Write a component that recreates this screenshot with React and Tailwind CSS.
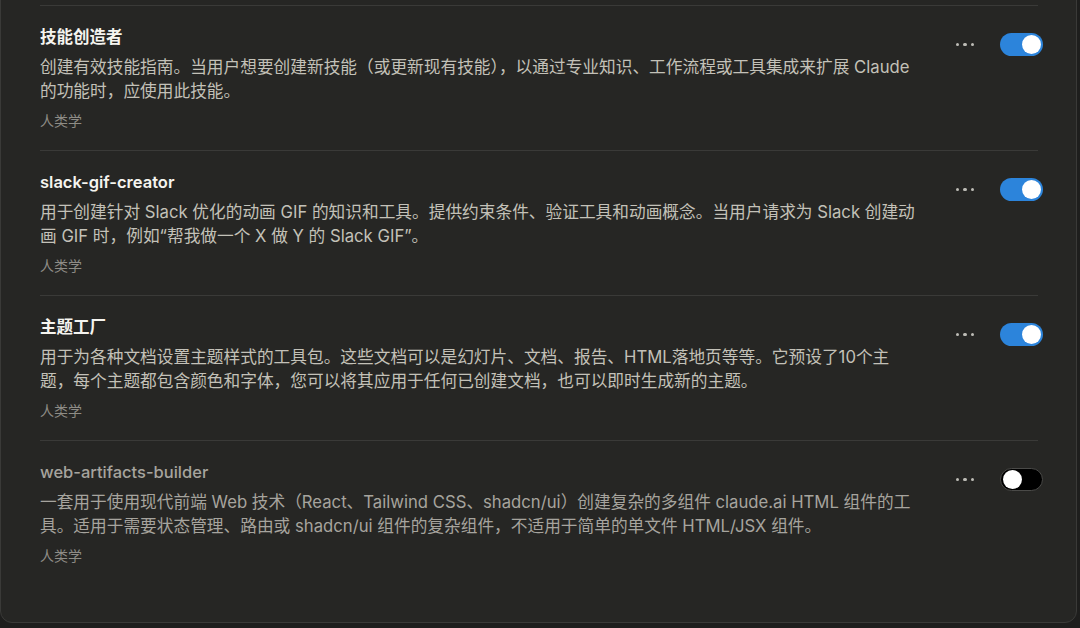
import { useState } from 'react';

const skills = [
  {
    id: 'skill-creator',
    name: '技能创造者',
    lines: [
      '创建有效技能指南。当用户想要创建新技能（或更新现有技能），以通过专业知识、工作流程或工具集成来扩展 Claude',
      '的功能时，应使用此技能。',
    ],
    author: '人类学',
    enabled: true,
  },
  {
    id: 'slack-gif-creator',
    name: 'slack-gif-creator',
    lines: [
      '用于创建针对 Slack 优化的动画 GIF 的知识和工具。提供约束条件、验证工具和动画概念。当用户请求为 Slack 创建动',
      '画 GIF 时，例如“帮我做一个 X 做 Y 的 Slack GIF”。',
    ],
    author: '人类学',
    enabled: true,
  },
  {
    id: 'theme-factory',
    name: '主题工厂',
    lines: [
      '用于为各种文档设置主题样式的工具包。这些文档可以是幻灯片、文档、报告、HTML落地页等等。它预设了10个主',
      '题，每个主题都包含颜色和字体，您可以将其应用于任何已创建文档，也可以即时生成新的主题。',
    ],
    author: '人类学',
    enabled: true,
  },
  {
    id: 'web-artifacts-builder',
    name: 'web-artifacts-builder',
    lines: [
      '一套用于使用现代前端 Web 技术（React、Tailwind CSS、shadcn/ui）创建复杂的多组件 claude.ai HTML 组件的工',
      '具。适用于需要状态管理、路由或 shadcn/ui 组件的复杂组件，不适用于简单的单文件 HTML/JSX 组件。',
    ],
    author: '人类学',
    enabled: false,
  },
];

function Toggle({ on, onChange }) {
  return (
    <button
      type="button"
      onClick={onChange}
      className={`flex items-center w-[43px] h-[23px] rounded-full px-[2px] ${
        on ? 'bg-[#2c84db] justify-end' : 'bg-black border border-[#4a4a48] justify-start'
      }`}
    >
      <span className="block w-[19px] h-[19px] rounded-full bg-white" />
    </button>
  );
}

function SkillRow({ skill, onToggle }) {
  const on = skill.enabled;
  return (
    <div className="flex border-t border-[#3a3a38] pt-[19px] pb-[19px]">
      <div className="flex-1 min-w-0">
        <div
          className={`text-[16.5px] leading-[24px] ${
            on ? 'text-[#f5f4ef] font-semibold' : 'text-[#a6a49e] font-medium'
          }`}
        >
          {skill.name}
        </div>
        <div
          className={`mt-[6px] text-[16.7px] leading-[24px] whitespace-nowrap ${
            on ? 'text-[#c3c1b8]' : 'text-[#a6a49e]'
          }`}
        >
          {skill.lines.map((l, i) => (
            <div key={i}>{l}</div>
          ))}
        </div>
        <div className="mt-[8px] text-[14px] leading-[20px] text-[#8e8c86]">{skill.author}</div>
      </div>
      <div className="flex items-start gap-[25px] pt-[8px] -mr-[5px]">
        <button type="button" className="flex items-center gap-[4px] h-[23px] px-[1px]">
          <span className="w-[3.5px] h-[3.5px] rounded-full bg-[#bdbcb6]" />
          <span className="w-[3.5px] h-[3.5px] rounded-full bg-[#bdbcb6]" />
          <span className="w-[3.5px] h-[3.5px] rounded-full bg-[#bdbcb6]" />
        </button>
        <Toggle on={on} onChange={onToggle} />
      </div>
    </div>
  );
}

export default function App() {
  const [items, setItems] = useState(skills);

  const toggle = (id) =>
    setItems((prev) => prev.map((s) => (s.id === id ? { ...s, enabled: !s.enabled } : s)));

  return (
    <div
      className="w-[1080px] h-[628px] overflow-hidden bg-[#1e1e1d]"
      style={{ fontFamily: 'Inter, "Noto Sans CJK SC", sans-serif' }}
    >
      {/* skills list card, scrolled so its top sits above the fold */}
      <div className="-mt-[40px] w-[1077px] rounded-b-[12px] border border-[#3a3a38] bg-[#262624] pl-[39px] pr-[38px] pt-[44px] pb-[37px]">
        {items.map((s) => (
          <SkillRow key={s.id} skill={s} onToggle={() => toggle(s.id)} />
        ))}
      </div>
    </div>
  );
}
